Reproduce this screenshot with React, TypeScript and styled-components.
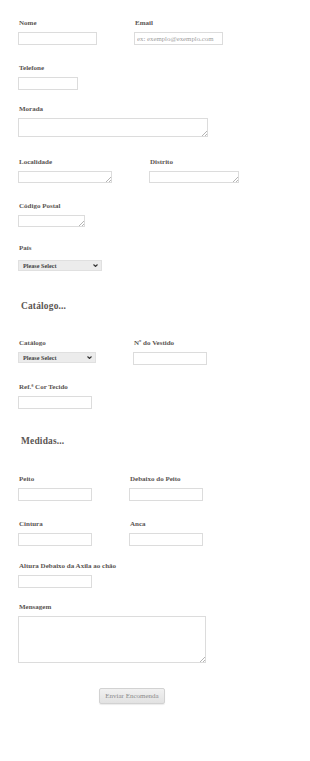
import React, { FC, ReactElement, ReactNode } from "react";
import styled, { createGlobalStyle } from "styled-components";

const GlobalStyle = createGlobalStyle`
  html, body {
    margin: 0;
    padding: 0;
    background: #ffffff;
  }
  body {
    font-family: "Liberation Serif", "Times New Roman", serif;
    color: #555555;
  }
`;

type FieldProps = {
  label: string;
  children: ReactNode;
  drop?: number;
};

const Field: FC<FieldProps> = ({ label, children, drop = 0 }): ReactElement => {
  return (
    <FieldBox>
      <Label $drop={drop}>{label}</Label>
      {children}
    </FieldBox>
  );
};

const Dropdown: FC<{ width: number }> = ({ width }): ReactElement => {
  return (
    <SelectWrap $w={width}>
      <Select defaultValue="">
        <option value="">Please Select</option>
      </Select>
      <Chevron viewBox="0 0 10 6" aria-hidden="true">
        <path d="M1 1 L5 5 L9 1" />
      </Chevron>
    </SelectWrap>
  );
};

const Memo: FC<{ width: number; height: number }> = ({ width, height }): ReactElement => {
  return (
    <MemoWrap $w={width} $h={height}>
      <TextArea />
    </MemoWrap>
  );
};

const App: FC = (): ReactElement => {
  return (
    <>
      <GlobalStyle />
      <Page>
        <Row $first={116}>
          <Field label="Nome">
            <TextInput $w={79} type="text" />
          </Field>
          <Field label="Email">
            <TextInput $w={89} type="email" placeholder="ex: exemplo@exemplo.com" />
          </Field>
        </Row>

        <Row $top={18}>
          <Field label="Telefone">
            <TextInput $w={60} type="text" />
          </Field>
        </Row>

        <Row $top={14}>
          <Field label="Morada">
            <Memo width={190} height={19} />
          </Field>
        </Row>

        <Row $top={20} $first={131}>
          <Field label="Localidade">
            <Memo width={94} height={12} />
          </Field>
          <Field label="Distrito">
            <Memo width={90} height={12} />
          </Field>
        </Row>

        <Row $top={18}>
          <Field label="Código Postal">
            <Memo width={67} height={12} />
          </Field>
        </Row>

        <Row $top={16}>
          <Field label="País" drop={3}>
            <Dropdown width={84} />
          </Field>
        </Row>

        <Heading $top={28}>Catálogo...</Heading>

        <Row $top={25} $first={115}>
          <Field label="Catálogo">
            <Dropdown width={78} />
          </Field>
          <Field label="Nº do Vestido">
            <TextInput $w={74} type="text" />
          </Field>
        </Row>

        <Row $top={17}>
          <Field label="Ref.ª Cor Tecido">
            <TextInput $w={74} type="text" />
          </Field>
        </Row>

        <Heading $top={25}>Medidas...</Heading>

        <Row $top={26} $first={111}>
          <Field label="Peito">
            <TextInput $w={74} type="text" />
          </Field>
          <Field label="Debaixo do Peito">
            <TextInput $w={74} type="text" />
          </Field>
        </Row>

        <Row $top={18} $first={111}>
          <Field label="Cintura">
            <TextInput $w={74} type="text" />
          </Field>
          <Field label="Anca">
            <TextInput $w={74} type="text" />
          </Field>
        </Row>

        <Row $top={15}>
          <Field label="Altura Debaixo da Axila ao chão">
            <TextInput $w={74} type="text" />
          </Field>
        </Row>

        <Row $top={14}>
          <Field label="Mensagem">
            <Memo width={188} height={47} />
          </Field>
        </Row>

        <ButtonBar>
          <SubmitButton type="button">Enviar Encomenda</SubmitButton>
        </ButtonBar>
      </Page>
    </>
  );
};

export default App;

const Page = styled.div`
  width: 310px;
  min-height: 761px;
  box-sizing: border-box;
  padding: 18px 0 0 18px;
  display: flex;
  flex-direction: column;
`;

const Row = styled.div<{ $top?: number; $first?: number }>`
  display: grid;
  grid-template-columns: ${(p) => (p.$first ? `${p.$first}px auto` : "auto")};
  justify-content: start;
  align-items: start;
  margin-top: ${(p) => p.$top ?? 0}px;
`;

const FieldBox = styled.div`
  display: flex;
  flex-direction: column;
  align-items: flex-start;
`;

const Label = styled.label<{ $drop: number }>`
  display: block;
  padding-left: 1px;
  height: 10px;
  line-height: 10px;
  font-size: 7px;
  font-weight: bold;
  color: #5a5552;
  white-space: nowrap;
  margin-bottom: ${(p) => 4 + p.$drop}px;
`;

const controlBase = `
  box-sizing: border-box;
  margin: 0;
  border: 1px solid #dcdcdc;
  border-radius: 0;
  background: #ffffff;
  font-family: "Liberation Serif", "Times New Roman", serif;
  color: #555555;
  outline: none;
`;

const TextInput = styled.input<{ $w: number }>`
  ${controlBase}
  display: block;
  width: ${(p) => p.$w}px;
  height: 13px;
  padding: 0 0 0 2px;
  font-size: 6.8px;

  &::placeholder {
    color: #a0a0a0;
  }
`;

const MemoWrap = styled.div<{ $w: number; $h: number }>`
  position: relative;
  width: ${(p) => p.$w}px;
  height: ${(p) => p.$h}px;

  &::after {
    content: "";
    position: absolute;
    right: 1px;
    bottom: 1px;
    width: 5px;
    height: 5px;
    pointer-events: none;
    background: linear-gradient(
      135deg,
      transparent 0 46%,
      #b5b5b5 46% 58%,
      transparent 58% 72%,
      #b5b5b5 72% 84%,
      transparent 84%
    );
  }
`;

const TextArea = styled.textarea`
  ${controlBase}
  display: block;
  width: 100%;
  height: 100%;
  padding: 0;
  font-size: 6.8px;
  resize: none;
  overflow: hidden;
`;

const SelectWrap = styled.div<{ $w: number }>`
  position: relative;
  width: ${(p) => p.$w}px;
  height: 11px;
`;

const Select = styled.select`
  ${controlBase}
  appearance: none;
  display: block;
  width: 100%;
  height: 100%;
  padding: 0 0 0 4px;
  font-size: 6.2px;
  font-weight: bold;
  color: #444444;
  background: #ececec;
  border-color: #e0e0e0;
`;

const Chevron = styled.svg`
  position: absolute;
  right: 4px;
  top: 4px;
  width: 5px;
  height: 3px;
  fill: none;
  stroke: #333333;
  stroke-width: 2.2;
  pointer-events: none;
`;

const Heading = styled.h2<{ $top: number }>`
  margin: ${(p) => p.$top}px 0 0 0;
  padding-left: 3px;
  height: 14px;
  line-height: 14px;
  font-size: 9.4px;
  font-weight: bold;
  color: #5a5552;
  letter-spacing: 0.2px;
`;

const ButtonBar = styled.div`
  margin-top: 25px;
  padding-left: 81px;
  display: flex;
`;

const SubmitButton = styled.button`
  box-sizing: border-box;
  width: 66px;
  height: 16px;
  padding: 0;
  border: 1px solid #d2d2d2;
  border-radius: 2px;
  background: linear-gradient(#f1f1f1, #e2e2e2);
  box-shadow: 0 1px 1px rgba(0, 0, 0, 0.08);
  font-family: "Liberation Serif", "Times New Roman", serif;
  font-size: 7px;
  color: #8a8a8a;
  cursor: pointer;
`;
